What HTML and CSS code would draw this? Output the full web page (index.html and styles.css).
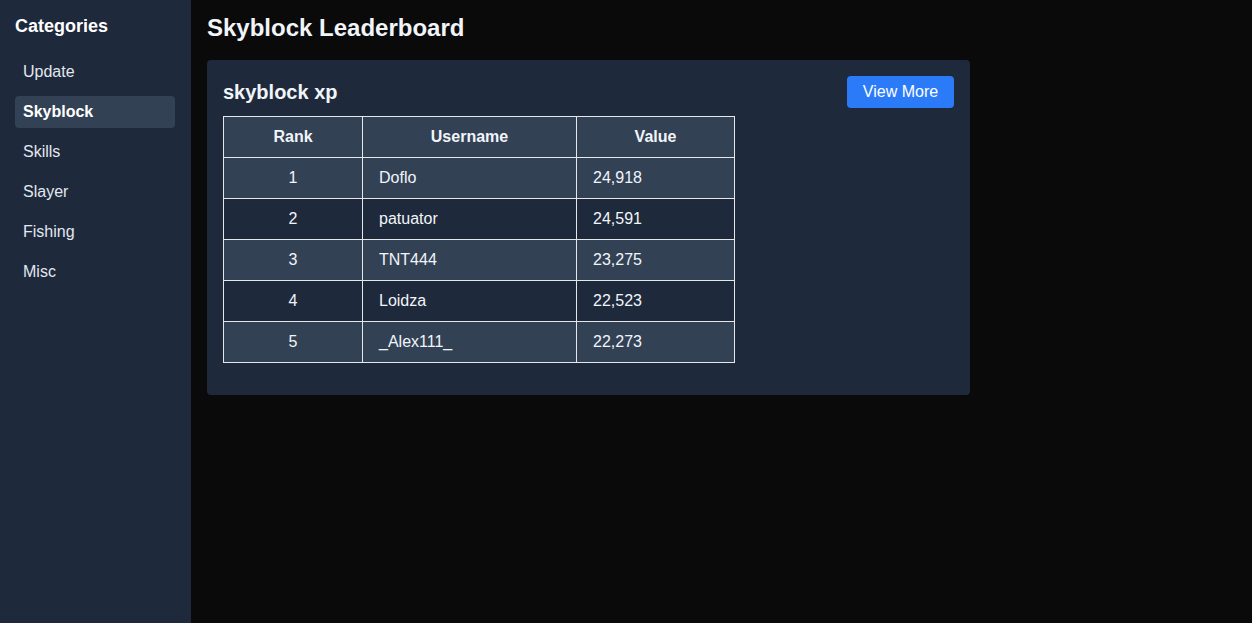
FILE: index.html
```html
<!DOCTYPE html>
<html>
<head>
<meta charset="utf-8">
<link rel="stylesheet" href="styles.css">
</head>
<body>
<div class="layout">
  <aside class="sidebar">
    <h2 class="side-title">Categories</h2>
    <ul class="side-list">
      <li class="side-item">Update</li>
      <li class="side-item active">Skyblock</li>
      <li class="side-item">Skills</li>
      <li class="side-item">Slayer</li>
      <li class="side-item">Fishing</li>
      <li class="side-item">Misc</li>
    </ul>
  </aside>
  <main class="main">
    <h1 class="page-title">Skyblock Leaderboard</h1>
    <section class="card">
      <div class="card-head">
        <h2 class="card-title">skyblock xp</h2>
        <button class="btn">View More</button>
      </div>
      <table class="board">
        <thead>
          <tr><th class="c-rank">Rank</th><th class="c-user">Username</th><th class="c-val">Value</th></tr>
        </thead>
        <tbody>
          <tr><td class="num">1</td><td>Doflo</td><td>24,918</td></tr>
          <tr><td class="num">2</td><td>patuator</td><td>24,591</td></tr>
          <tr><td class="num">3</td><td>TNT444</td><td>23,275</td></tr>
          <tr><td class="num">4</td><td>Loidza</td><td>22,523</td></tr>
          <tr><td class="num">5</td><td>_Alex111_</td><td>22,273</td></tr>
        </tbody>
      </table>
    </section>
  </main>
</div>
</body>
</html>
```
FILE: styles.css
```css
* { box-sizing: border-box; }
html, body { margin: 0; padding: 0; height: 100%; }
body {
  background: #0a0a0a;
  color: #e5e7eb;
  font-family: "Liberation Sans", Arial, sans-serif;
  font-size: 16px;
}
.layout { display: flex; min-height: 100vh; }
.sidebar {
  width: 191px;
  flex: none;
  background: #1e293b;
  padding: 14px 16px 15px 15px;
}
.side-title {
  margin: 0 0 18px 0;
  font-size: 18px;
  line-height: 24px;
  font-weight: bold;
  color: #ffffff;
}
.side-list { list-style: none; margin: 0; padding: 0; display: flex; flex-direction: column; gap: 8px; }
.side-item {
  height: 32px;
  line-height: 32px;
  padding: 0 8px;
  border-radius: 4px;
  color: #e2e8f0;
}
.side-item.active { background: #334155; font-weight: bold; color: #ffffff; }
.main { flex: 1; padding: 14px 16px; }
.page-title {
  margin: 0 0 18px 0;
  font-size: 24px;
  line-height: 28px;
  font-weight: bold;
  color: #f1f5f9;
}
.card {
  width: 763px;
  background: #1e293b;
  border-radius: 4px;
  padding: 16px 16px 32px 16px;
}
.card-head { display: flex; justify-content: space-between; align-items: center; margin-bottom: 8px; }
.card-title { margin: 0; font-size: 20px; font-weight: bold; color: #f1f5f9; }
.btn {
  background: #2b7bf8;
  color: #ffffff;
  border: none;
  border-radius: 4px;
  height: 32px;
  width: 107px;
  font-family: "Liberation Sans", Arial, sans-serif;
  font-size: 16px;
  padding: 0;
}
.board { border-collapse: collapse; color: #f1f5f9; }
.board th, .board td { border: 1px solid #e5e7eb; height: 41px; padding: 0 16px; text-align: left; }
.board th { text-align: center; font-weight: bold; background: #334155; }
.c-rank { width: 139px; }
.c-user { width: 214px; }
.c-val { width: 158px; }
.board td.num { text-align: center; }
.board tbody tr:nth-child(odd) { background: #334155; }
.board tbody tr:nth-child(even) { background: #1e293b; }
```
